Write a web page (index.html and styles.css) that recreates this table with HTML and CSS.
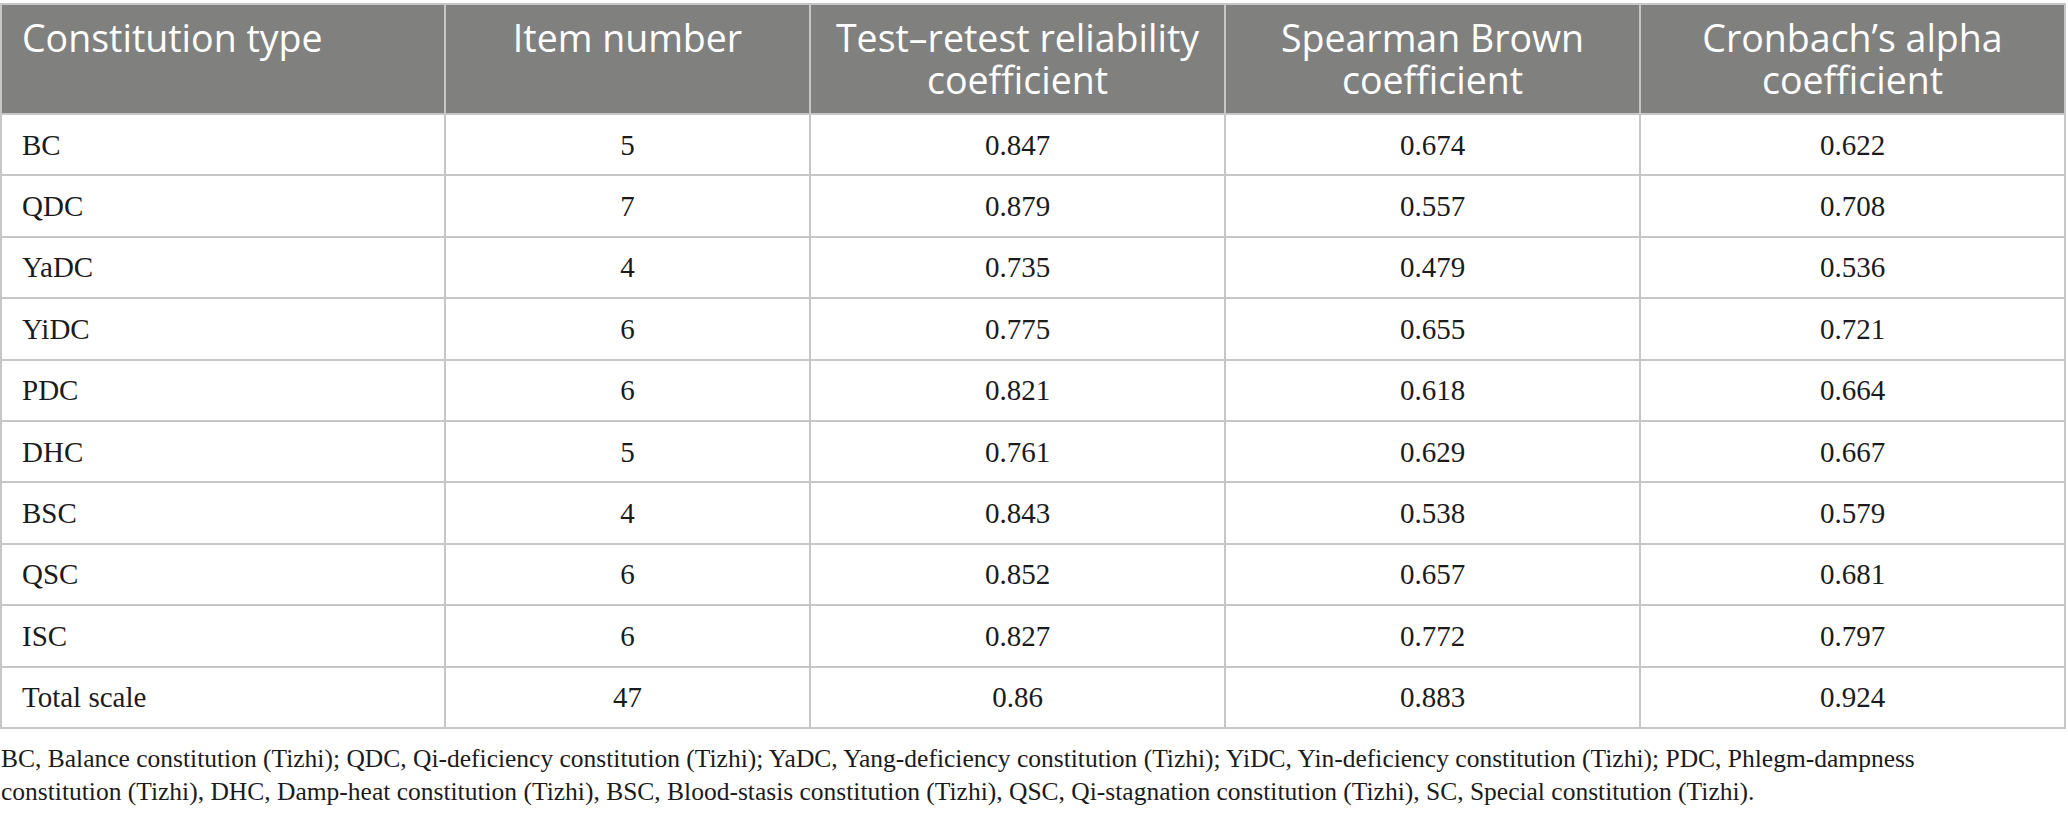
FILE: index.html
```html
<!DOCTYPE html>
<html lang="en">
<head>
<meta charset="utf-8">
<title>Reliability of the constitution scale</title>
<link rel="stylesheet" href="styles.css">
</head>
<body>
<div class="wrap">
<table class="data">
  <colgroup>
    <col class="c1"><col class="c2"><col class="c3"><col class="c4"><col class="c5">
  </colgroup>
  <thead>
    <tr>
      <th class="first">Constitution type</th>
      <th>Item number</th>
      <th>Test–retest reliability coefficient</th>
      <th>Spearman Brown coefficient</th>
      <th>Cronbach’s alpha coefficient</th>
    </tr>
  </thead>
  <tbody>
    <tr><td class="first">BC</td><td>5</td><td>0.847</td><td>0.674</td><td>0.622</td></tr>
    <tr><td class="first">QDC</td><td>7</td><td>0.879</td><td>0.557</td><td>0.708</td></tr>
    <tr><td class="first">YaDC</td><td>4</td><td>0.735</td><td>0.479</td><td>0.536</td></tr>
    <tr><td class="first">YiDC</td><td>6</td><td>0.775</td><td>0.655</td><td>0.721</td></tr>
    <tr><td class="first">PDC</td><td>6</td><td>0.821</td><td>0.618</td><td>0.664</td></tr>
    <tr><td class="first">DHC</td><td>5</td><td>0.761</td><td>0.629</td><td>0.667</td></tr>
    <tr><td class="first">BSC</td><td>4</td><td>0.843</td><td>0.538</td><td>0.579</td></tr>
    <tr><td class="first">QSC</td><td>6</td><td>0.852</td><td>0.657</td><td>0.681</td></tr>
    <tr><td class="first">ISC</td><td>6</td><td>0.827</td><td>0.772</td><td>0.797</td></tr>
    <tr><td class="first">Total scale</td><td>47</td><td>0.86</td><td>0.883</td><td>0.924</td></tr>
  </tbody>
</table>
<p class="note">BC, Balance constitution (Tizhi); QDC, Qi-deficiency constitution (Tizhi); YaDC, Yang-deficiency constitution (Tizhi); YiDC, Yin-deficiency constitution (Tizhi); PDC, Phlegm-dampness constitution (Tizhi), DHC, Damp-heat constitution (Tizhi), BSC, Blood-stasis constitution (Tizhi), QSC, Qi-stagnation constitution (Tizhi), SC, Special constitution (Tizhi).</p>
</div>
</body>
</html>
```

FILE: styles.css
```css
html, body {
  margin: 0;
  padding: 0;
  background: #ffffff;
}

.wrap {
  padding-top: 3px;
  width: 2064px;
}

.data {
  width: 2064px;
  table-layout: fixed;
  border-collapse: collapse;
  font-family: "Liberation Serif", "Times New Roman", serif;
  color: #1b1b1b;
}

.c1 { width: 444px; }
.c2 { width: 365px; }
.c3 { width: 415px; }
.c4 { width: 415px; }
.c5 { width: 425px; }

.data th,
.data td {
  border: 2px solid #c6c6c6;
  text-align: center;
}

.data th {
  background: #80817f;
  color: #ffffff;
  font-family: "Open Sans", "Noto Sans", sans-serif;
  font-weight: 400;
  font-size: 37.5px;
  line-height: 42px;
  vertical-align: top;
  padding: 12px 20px 12px 20px;
  height: 84px;
  box-sizing: content-box;
}

.data td {
  font-size: 29px;
  line-height: 32px;
  height: 59.4px;
  padding: 0 20px;
  vertical-align: middle;
}

.data .first {
  text-align: left;
  padding-left: 20px;
}

.note {
  width: 1960px;
  margin: 13px 0 0 0;
  padding-left: 1px;
  font-family: "Liberation Serif", "Times New Roman", serif;
  font-size: 25.5px;
  line-height: 33px;
  color: #1b1b1b;
}
```
